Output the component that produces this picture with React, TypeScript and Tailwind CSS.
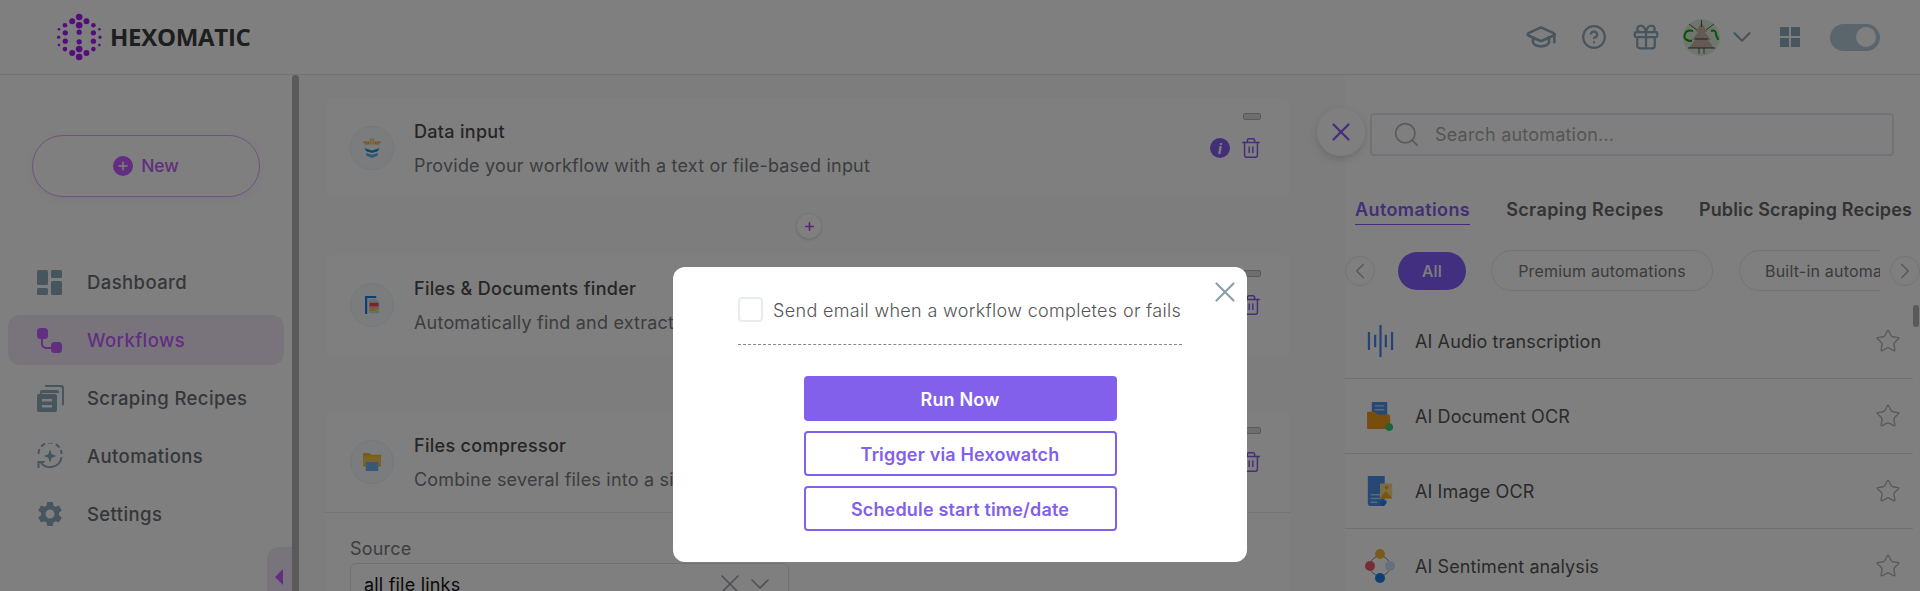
import { ChevronDown, ChevronLeft, ChevronRight, CircleHelp, Gift, GraduationCap, Plus, Search, Star, Trash2, X } from 'lucide-react';
import { MdSettings } from 'react-icons/md';

const logoDots = [
  [238, 47, 10], [217, 60, 9], [260, 60, 9], [238, 72, 10], [195, 72, 7], [281, 72, 7],
  [177, 84, 4], [299, 84, 4], [196, 95, 8], [281, 95, 8], [238, 93, 8], [176, 108, 5],
  [301, 108, 5], [196, 120, 8], [281, 120, 8], [238, 122, 8], [177, 132, 4], [299, 132, 4],
  [195, 144, 7], [281, 144, 7], [238, 144, 10], [217, 156, 9], [260, 156, 9], [238, 168, 10],
];

function Logo() {
  return (
    <svg viewBox="165 35 145 145" className="w-[48px] h-[48px]">
      {logoDots.map(([cx, cy, r]) => (
        <circle key={`${cx}-${cy}`} cx={cx} cy={cy} r={r} fill="#a818ff" />
      ))}
    </svg>
  );
}

function DashboardIcon() {
  return (
    <svg viewBox="0 0 25 25" className="w-[25px] h-[25px]" fill="#8eaabc">
      <rect x="0" y="0" width="11" height="15" rx="1.5" />
      <rect x="0" y="18" width="11" height="7" rx="1.5" />
      <rect x="14" y="0" width="11" height="8" rx="1.5" />
      <rect x="14" y="11" width="11" height="14" rx="1.5" />
    </svg>
  );
}

function WorkflowIcon() {
  return (
    <svg viewBox="0 0 25 25" className="w-[25px] h-[25px]">
      <path d="M5 10v6a4 4 0 0 0 4 4h7" fill="none" stroke="#c45cff" strokeWidth="2" />
      <rect x="0" y="0" width="11" height="11" rx="3.5" fill="#c45cff" />
      <rect x="14" y="14" width="11" height="11" rx="3.5" fill="#c45cff" />
    </svg>
  );
}

function RecipesIcon() {
  return (
    <svg viewBox="0 0 27 27" className="w-[27px] h-[27px]" fill="#8eaabc">
      <path d="M8 0h16a3 3 0 0 1 3 3v16a3 3 0 0 1-2 2V4a2 2 0 0 0-2-2H8z" />
      <path d="M5 5h15a2 2 0 0 1 2 2v1H6a2 2 0 0 0-2 2v1H3V7a2 2 0 0 1 2-2z" />
      <path fillRule="evenodd" d="M2 9h16a2 2 0 0 1 2 2v14a2 2 0 0 1-2 2H2a2 2 0 0 1-2-2V11a2 2 0 0 1 2-2zm3 5v2.500h10V14zm0 6v2.500h10V20z" />
    </svg>
  );
}

function AutomationsIcon() {
  return (
    <svg viewBox="0 0 26 26" className="w-[26px] h-[26px]" fill="none" stroke="#8eaabc" strokeWidth="2">
      <path d="M1.500 11a11.500 11.500 0 0 1 23 0" strokeDasharray="5 3" />
      <path d="M24.500 14a11.500 11.500 0 0 1-21 5" />
      <path d="M1.500 25v-6h6" />
      <path d="M13 6.500l1.800 4.700 4.700 1.800-4.700 1.800-1.800 4.700-1.800-4.700-4.700-1.800 4.700-1.800z" fill="#8eaabc" stroke="none" />
    </svg>
  );
}

function DataInputIcon() {
  return (
    <svg viewBox="0 0 24 24" className="w-[20px] h-[20px]">
      <path d="M1 5h7v2H3M23 5h-7v2h5" fill="none" stroke="#f0a930" strokeWidth="1.500" />
      <path d="M10 1v7M12 0v8M14 1v7" stroke="#f0a930" strokeWidth="1" />
      <path d="M3 12l9 3 9-3-2 4-7 2-7-2z" fill="#1f8fe0" />
      <path d="M5 18l7 2 7-2v3l-7 3-7-3z" fill="#53b0f0" />
    </svg>
  );
}

function FinderIcon() {
  return (
    <svg viewBox="0 0 20 24" className="w-[15px] h-[18px]">
      <path d="M0 0h15v2.500H3V24H1a1 1 0 0 1-1-1z" fill="#1a7ee6" />
      <path d="M5 4h10l4 4v15H5z" fill="#d5d9de" />
      <rect x="6" y="9" width="12" height="5" fill="#ef4a5a" />
      <rect x="6" y="15" width="12" height="2" fill="#f7b733" />
      <rect x="6" y="18" width="8" height="2" fill="#f7b733" />
    </svg>
  );
}

function ZipIcon() {
  return (
    <svg viewBox="0 0 20 20" className="w-[18px] h-[18px]">
      <path d="M0 0h7l2 2h11v13H0z" fill="#f7b733" />
      <rect x="0" y="4" width="20" height="9" fill="#fbc64a" />
      <rect x="3" y="10" width="14" height="10" rx="1" fill="#6fb0f0" />
    </svg>
  );
}

function AudioIcon() {
  return (
    <svg viewBox="0 0 30 36" className="w-[29px] h-[32px]" stroke="#4a85e8" strokeWidth="2.500">
      <path d="M2 8v20M9 11v14M15 0v36M21 11v14M28 8v20" />
    </svg>
  );
}

function PdfIcon() {
  return (
    <svg viewBox="0 0 28 30" className="w-[27px] h-[29px]">
      <rect x="5" y="0" width="16" height="14" fill="#4a90e8" />
      <path d="M8 4h10M8 8h10" stroke="#b6d4f7" strokeWidth="1.500" />
      <path d="M0 11a1 1 0 0 1 1-1h7l3 3h11a2 2 0 0 1 2 2v13H1a1 1 0 0 1-1-1z" fill="#f09a1a" />
      <circle cx="23" cy="26" r="4" fill="#3dc46a" />
    </svg>
  );
}

function ImageOcrIcon() {
  return (
    <svg viewBox="0 0 26 32" className="w-[26px] h-[30px]">
      <path d="M0 0h18v32H3a3 3 0 0 1-3-3z" fill="#4a90e8" />
      <path d="M3 20h11M3 24h11M3 28h7" stroke="#b6d4f7" strokeWidth="1.500" />
      <path d="M14 26h6v3l-3 3h-3z" fill="#2a7ee8" />
      <rect x="13" y="8" width="13" height="16" fill="#f7d98a" />
      <path d="M13 24l6-8 7 8z" fill="#f0a91a" />
      <circle cx="20" cy="12" r="2" fill="#f0a91a" />
    </svg>
  );
}

function SentimentIcon() {
  return (
    <svg viewBox="0 0 30 34" className="w-[30px] h-[34px]">
      <circle cx="15" cy="17" r="10" fill="none" stroke="#7f8fa0" strokeWidth="1" />
      <circle cx="15" cy="5" r="5" fill="#f7b733" />
      <circle cx="5" cy="17" r="5" fill="#ef5a6a" />
      <circle cx="25" cy="17" r="5" fill="#cfe0f5" />
      <circle cx="15" cy="29" r="5" fill="#1a7ee6" />
    </svg>
  );
}

function Avatar() {
  return (
    <div className="w-[37px] h-[37px] rounded-full bg-[#dceedc] overflow-hidden">
      <svg viewBox="0 0 37 37" className="w-[37px] h-[37px]">
        <path d="M18.500 3L24 13l-2 0 6 8-3 0 6 8H6l6-8-3 0 6-8-2 0z" fill="#c9b4a6" />
        <path d="M9 22c-6 0-9-3-7-7 1-3 4-4 8-3M28 12c3-1 5 0 5 3s2 3 2 6" fill="none" stroke="#0ea30e" strokeWidth="2" />
        <path d="M6 5l8 6M31 5l-8 6M18.500 1v7M16 29v6M21 29v6" stroke="#222" strokeWidth="0.700" fill="none" />
        <path d="M5 29h27M12 20h13" stroke="#222" strokeWidth="0.800" />
      </svg>
    </div>
  );
}

function NavItem({ icon, label, active }: { icon: React.ReactNode; label: string; active?: boolean }) {
  return (
    <div className={`flex items-center h-[50px] mb-2 ml-2 w-[276px] rounded-xl pl-[29px] ${active ? 'bg-[#f3e8f8]' : ''}`}>
      <div className="w-[50px] flex items-center">{icon}</div>
      <span className={`pt-[1px] text-[18.500px] tracking-[0.4px] font-medium ${active ? 'text-[#c45cff]' : 'text-[#6a6e74]'}`}>{label}</span>
    </div>
  );
}

function Card({ icon, title, desc, info, className, children }: {
  icon: React.ReactNode; title: string; desc: string; info?: boolean; className?: string; children?: React.ReactNode;
}) {
  return (
    <div className={`bg-white rounded-lg ${className ?? ''}`}>
      <div className="flex items-start pl-[25px] pr-[29px] pt-[15px]">
        <div className="mt-[13px] w-[44px] h-[44px] rounded-full bg-[#f7f9fc] border border-[#eaeef2] flex items-center justify-center shrink-0">
          {icon}
        </div>
        <div className="ml-[20px] flex-1">
          <div className="pt-[1px] text-[18px] tracking-[0.3px] font-medium text-[#4c4c4c] leading-[36px]">{title}</div>
          <div className="text-[18px] tracking-[0.2px] text-[#777b80] leading-[31px]">{desc}</div>
        </div>
        <div className="flex flex-col items-end">
          <div className="w-[18px] h-[7px] bg-[#dcdcdc] border border-[#b4b4b4] rounded-[2px]" />
          <div className="flex items-center gap-[10px] mt-[17px] -mr-[1px]">
            {info && (
              <div className="w-[20px] h-[20px] rounded-full bg-[#8a5cf0] text-white text-[14px] italic font-bold flex items-center justify-center">i</div>
            )}
            <Trash2 className="w-[22px] h-[22px] text-[#8a5cf0]" strokeWidth={1.6} />
          </div>
        </div>
      </div>
      {children}
    </div>
  );
}

function PanelRow({ icon, label }: { icon: React.ReactNode; label: string }) {
  return (
    <div className="flex items-center h-[75px] border-b border-[#dfe4ea] shrink-0">
      <div className="w-[70px] flex justify-center">{icon}</div>
      <span className="pt-[1px] text-[18px] tracking-[0.1px] text-[#555] flex-1">{label}</span>
      <Star className="w-[26px] h-[26px] text-[#b0b4b8] mr-[12px]" strokeWidth={1.3} />
    </div>
  );
}

export default function App() {
  return (
    <div className="relative w-[1920px] h-[591px] overflow-hidden bg-white font-['Inter','Noto_Sans',sans-serif]">
      <header className="flex items-center justify-between h-[75px] border-b border-[#e4e6e8] pl-[55px] pr-[40px]">
        <div className="flex items-center gap-[7px]">
          <Logo />
          <span className="font-['Open_Sans',sans-serif] text-[24px] font-bold text-[#3c3c3c] tracking-[-0.3px]">HEXOMATIC</span>
        </div>
        <div className="flex items-center">
          <GraduationCap className="w-[32px] h-[32px] text-[#8eaabc]" strokeWidth={2} />
          <CircleHelp className="w-[26px] h-[26px] text-[#8eaabc] ml-[24px]" strokeWidth={2} />
          <Gift className="w-[30px] h-[30px] text-[#8eaabc] ml-[24px]" strokeWidth={1.8} />
          <div className="ml-[22px]"><Avatar /></div>
          <ChevronDown className="w-[30px] h-[30px] text-[#8eaabc] ml-[7px]" strokeWidth={1.8} />
          <div className="ml-[23px] grid grid-cols-2 gap-[2px] w-[20px] h-[20px]">
            <div className="bg-[#8eaabc]" />
            <div className="bg-[#8eaabc]" />
            <div className="bg-[#8eaabc]" />
            <div className="bg-[#8eaabc]" />
          </div>
          <div className="ml-[30px] w-[50px] h-[27px] rounded-full bg-[#b6ccd8] flex items-center justify-end pr-[4px]">
            <div className="w-[20px] h-[20px] rounded-full bg-white" />
          </div>
        </div>
      </header>

      <div className="flex h-[516px]">
        <aside className="w-[299px] flex shrink-0">
          <div className="relative flex-1">
            <div className="ml-[32px] mt-[60px] w-[228px] h-[62px] rounded-full border border-[#d9a8f5] shadow-[0_2px_10px_rgba(200,140,240,0.15)] flex items-center justify-center gap-[8px]">
              <div className="w-[20px] h-[20px] rounded-full bg-[#c45cff] flex items-center justify-center">
                <Plus className="w-[14px] h-[14px] text-white" strokeWidth={2.5} />
              </div>
              <span className="text-[17.500px] font-medium text-[#c45cff]">New</span>
            </div>
            <nav className="mt-[60px]">
              <NavItem icon={<DashboardIcon />} label="Dashboard" />
              <NavItem icon={<WorkflowIcon />} label="Workflows" active />
              <NavItem icon={<RecipesIcon />} label="Scraping Recipes" />
              <NavItem icon={<AutomationsIcon />} label="Automations" />
              <NavItem icon={<MdSettings className="w-[30px] h-[30px] -ml-[2px] text-[#8eaabc]" />} label="Settings" />
            </nav>
            <div className="absolute right-0 top-[472px] w-[25px] h-[60px] rounded-l-xl bg-[#f3e8f8] flex items-center pl-[8px]">
              <div className="w-0 h-0 border-y-[8px] border-y-transparent border-r-[8px] border-r-[#c45cff]" />
            </div>
          </div>
          <div className="w-[7px] bg-[#b4b4b4] rounded-t-md" />
        </aside>

        <main className="flex-1 bg-[#fafafa] pl-[26px] pr-[55px] pt-[23px]">
          <Card icon={<DataInputIcon />} title="Data input" desc="Provide your workflow with a text or file-based input" info className="h-[99px]" />
          <div className="h-[58px] flex items-center justify-center pl-[3px]">
            <div className="w-[26px] h-[26px] rounded-full bg-white border border-[#eee] shadow-sm flex items-center justify-center">
              <Plus className="w-[13px] h-[13px] text-[#c040f0]" strokeWidth={3} />
            </div>
          </div>
          <Card icon={<FinderIcon />} title="Files & Documents finder" desc="Automatically find and extract documents" className="h-[101px]" />
          <div className="h-[56px]" />
          <Card icon={<ZipIcon />} title="Files compressor" desc="Combine several files into a single archive" className="h-[300px]">
            <div className="mt-[17px] border-t border-[#e6e8ea] px-[25px] pt-[23px]">
              <div className="text-[18px] tracking-[0.2px] text-[#777b80] leading-[26px]">Source</div>
              <div className="mt-[1px] w-[439px] h-[42px] border border-[#dfe2e6] rounded-md flex items-center pl-[13px] pr-[12px]">
                <span className="flex-1 text-[18px] tracking-[0.2px] text-[#111]">all file links</span>
                <X className="w-[32px] h-[32px] text-[#9aa0a6]" strokeWidth={1.2} />
                <ChevronDown className="w-[32px] h-[32px] text-[#9aa0a6] -ml-[2px]" strokeWidth={1.2} />
              </div>
            </div>
          </Card>
        </main>

        <section className="relative w-[575px] shrink-0 bg-white flex flex-col">
          <div className="absolute -left-[28px] top-[33px] w-[48px] h-[48px] rounded-full bg-white shadow-[0_3px_8px_rgba(0,0,0,0.15)] flex items-center justify-center">
            <X className="w-[30px] h-[30px] text-[#8a5cf0]" strokeWidth={1.8} />
          </div>
          <div className="mt-[38px] ml-[25px] w-[524px] h-[43px] shrink-0 border-2 border-[#e3e7ef] rounded flex items-center pl-[20px] gap-[14px]">
            <Search className="w-[29px] h-[29px] text-[#b0b4b8]" strokeWidth={1.4} />
            <span className="text-[18px] tracking-[0.2px] text-[#aaa]">Search automation...</span>
          </div>
          <div className="mt-[39px] pl-[10px] flex gap-[36px] shrink-0 whitespace-nowrap text-[18px] tracking-[0.4px] font-semibold text-[#666]">
            <span className="text-[#8a5cf0] border-b border-[#8a5cf0] pt-[2px] pb-[1px] leading-[26px]">Automations</span>
            <span className="pt-[2px] leading-[26px]">Scraping Recipes</span>
            <span className="pt-[2px] -ml-[1px] tracking-[0.15px] leading-[26px]">Public Scraping Recipes</span>
          </div>
          <div className="mt-[25px] h-[41px] flex items-center shrink-0">
            <div className="w-[30px] h-[30px] rounded-full border border-[#e6e8ea] flex items-center justify-center shrink-0">
              <ChevronLeft className="w-[26px] h-[26px] text-[#b0b4b8]" strokeWidth={1.6} />
            </div>
            <div className="flex-1 ml-[23px] flex items-center overflow-hidden whitespace-nowrap text-[16px] tracking-[0.2px] text-[#777]">
              <div className="w-[68px] h-[38px] rounded-full bg-[#865ffe] text-white font-medium flex items-center justify-center shrink-0">All</div>
              <div className="w-[222px] h-[41px] rounded-full border border-[#e6e8ea] flex items-center justify-center ml-[25px] shrink-0">Premium automations</div>
              <div className="w-[222px] h-[41px] rounded-full border border-[#e6e8ea] flex items-center pl-[25px] ml-[26px] shrink-0">Built-in automations</div>
            </div>
            <div className="ml-[10px] w-[30px] h-[30px] rounded-full border border-[#e6e8ea] flex items-center justify-center shrink-0">
              <ChevronRight className="w-[26px] h-[26px] text-[#b0b4b8]" strokeWidth={1.6} />
            </div>
          </div>
          <div className="mt-[13px] mr-[7px] flex flex-col">
            <PanelRow icon={<AudioIcon />} label="AI Audio transcription" />
            <PanelRow icon={<PdfIcon />} label="AI Document OCR" />
            <PanelRow icon={<ImageOcrIcon />} label="AI Image OCR" />
            <PanelRow icon={<SentimentIcon />} label="AI Sentiment analysis" />
          </div>
          <div className="absolute right-[1px] top-[230px] w-[6px] h-[22px] rounded-full bg-[#b4b4b4]" />
        </section>
      </div>

      <div className="absolute inset-0 bg-black/50 flex justify-center pt-[267px]">
        <div className="relative w-[574px] h-[295px] bg-white rounded-xl flex flex-col items-center pt-[30px]">
          <button className="absolute top-[8px] right-[5px] text-[#8fa0aa]">
            <X className="w-[34px] h-[34px]" strokeWidth={1.6} />
          </button>
          <div className="flex items-center w-[444px] h-[25px]">
            <div className="w-[25px] h-[25px] rounded border-2 border-[#e8ecf0] shrink-0" />
            <span className="ml-[10px] pt-[1px] text-[18px] tracking-[0.33px] font-light text-[#555] whitespace-nowrap">Send email when a workflow completes or fails</span>
          </div>
          <div className="w-[444px] mt-[22px] border-b border-dashed border-[#888]" />
          <div className="mt-[31px] w-[313px] flex flex-col gap-[10px] text-[18px] tracking-[0.17px] font-semibold">
            <div className="h-[45px] rounded bg-[#8260ec] text-white flex items-center justify-center pt-[1px]">Run Now</div>
            <div className="h-[45px] rounded border-2 border-[#8260ec] text-[#8260ec] flex items-center justify-center pt-[1px]">Trigger via Hexowatch</div>
            <div className="h-[45px] rounded border-2 border-[#8260ec] text-[#8260ec] flex items-center justify-center pt-[1px]">Schedule start time/date</div>
          </div>
        </div>
      </div>
    </div>
  );
}
